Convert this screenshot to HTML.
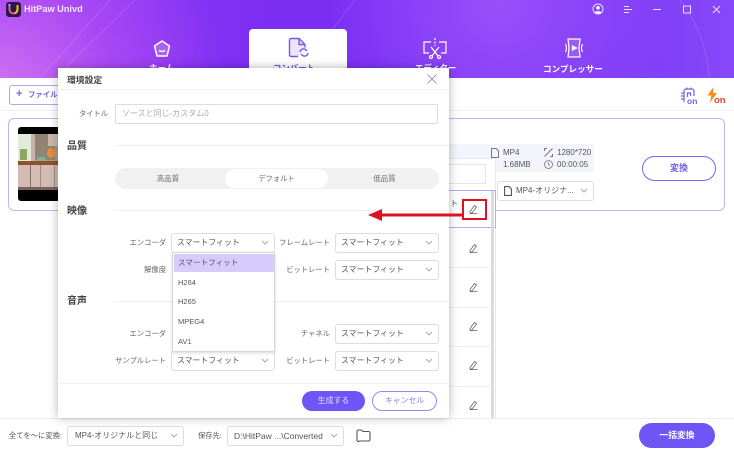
<!DOCTYPE html>
<html lang="ja"><head><meta charset="utf-8">
<style>
*{box-sizing:border-box;margin:0;padding:0}
html,body{width:734px;height:450px;overflow:hidden;background:#fff}
body{position:relative;font-family:"Liberation Sans","Noto Sans CJK JP",sans-serif;color:#444}
.a{position:absolute;white-space:nowrap}
.hd{left:0;top:0;width:734px;height:78px;background:radial-gradient(circle at 0 85px,#cf70f2 0,#a848f5 110px,rgba(140,55,245,0) 230px),radial-gradient(circle at 500px 5px,#9850fb 0,rgba(125,50,246,0) 170px),linear-gradient(90deg,#8a35f4 0,#7c2ef3 40%,#7c35f5 75%,#8548f8 100%);overflow:hidden}
.lab{font-size:7.3px;color:#666;text-align:right;line-height:12px}
.sel{position:absolute;height:20px;width:104px;border:1px solid #dcdce2;border-radius:3px;background:#fff;font-size:7.9px;color:#555;line-height:18px;padding-left:5px}
.sel svg,.bs svg{position:absolute;right:5px;top:6px}
.bs{position:absolute;height:20px;border:1px solid #dcdce2;border-radius:3px;background:#fff;font-size:8px;color:#555;line-height:18px;padding-left:7px}
.sec{font-size:10px;font-weight:bold;color:#444;left:67px}
.ln{height:1px;background:#eeeef1;left:115px;width:334px}
.pen{position:absolute;left:469px;width:9px;height:9px}
.opt{position:absolute;left:1px;width:100px;height:18px;font-size:7.5px;line-height:18px;padding-left:4px;color:#555}
</style></head><body>

<div class="a hd">
<svg class="a" style="left:0;top:0" width="734" height="78" fill="none" stroke="#fff" stroke-opacity=".14"><path d="M40 78L110 0M55 78L135 0M295 78L355 0M710 78C706 50 700 25 680 0"/></svg>
</div>

<svg class="a" style="left:6px;top:2px" width="15" height="15" viewBox="0 0 15 15"><rect width="15" height="15" rx="3" fill="#2a1a4a"/><path d="M3.500 4v3.500a4 4 0 0 0 8 0V3" fill="none" stroke="#f0509a" stroke-width="2"/><path d="M11.500 3v4.500a4 4 0 0 1-3 3.800" fill="none" stroke="#fbbf24" stroke-width="2"/><circle cx="3.500" cy="3" r="1.100" fill="#c4b5fd"/></svg>
<div class="a" style="left:24px;top:3px;font-size:9.200px;font-weight:bold;color:#f3e8ff;line-height:13px">HitPaw Univd</div>

<svg class="a" style="left:590px;top:3px" width="140" height="14" viewBox="0 0 140 14" fill="none" stroke="#e9dcff" stroke-width="1"><circle cx="8" cy="6" r="5"/><circle cx="8" cy="4.800" r="1.800" fill="#fff" stroke="none"/><path d="M4.500 9.500q3.500-3 7 0q-3.500 2.500-7 0" fill="#fff" stroke="none"/><path d="M34 3.500h5M34 6.500h8M34 9.500h5"/><path d="M63 6.500h8"/><rect x="93.500" y="3" width="7" height="7"/><path d="M123 3l7 7M130 3l-7 7"/></svg>

<!-- tabs -->
<svg class="a" style="left:153px;top:40px" width="18" height="18" viewBox="0 0 18 18" fill="none" stroke="#fff" stroke-width="1.500"><path d="M9 1l7.500 5-2.500 10H4L1.500 6z" stroke-linejoin="round" fill="#ffffff30"/><path d="M6 10.500q3 1.800 6 0"/></svg>
<div class="a" style="left:249px;top:29px;width:98px;height:49px;background:linear-gradient(#fff 70%,#eee);border-radius:4px 4px 0 0"></div>
<svg class="a" style="left:288px;top:37px" width="22" height="21" viewBox="0 0 22 21" fill="none" stroke="#7d56e8" stroke-width="1.400"><path d="M10 19.500H3a1.500 1.500 0 0 1-1.500-1.500V3A1.500 1.500 0 0 1 3 1.500h8l6 6v3" fill="#ece6fd"/><path d="M11 1.500v6h6"/><path d="M12 15a3.500 3.500 0 0 1 6-2l1 1M20 16a3.500 3.500 0 0 1-6 2l-1-1"/></svg>
<div class="a" style="left:273px;top:62px;font-size:8.400px;font-weight:bold;color:#7d56e8">コンバート</div>
<div class="a" style="left:149px;top:62px;font-size:8.500px;font-weight:bold;color:#fff">ホーム</div>
<svg class="a" style="left:423px;top:37px" width="24" height="23" viewBox="0 0 24 23" fill="none" stroke="#fff" stroke-width="1.200"><path d="M8 5H1v11h5M16 5h7v11h-5"/><path d="M12 1v8" stroke-dasharray="2 1.500"/><path d="M8 10l7 9M16 10l-7 9"/><circle cx="8" cy="20" r="1.500"/><circle cx="16" cy="20" r="1.500"/></svg>
<div class="a" style="left:415px;top:62px;font-size:8.400px;font-weight:bold;color:#fff">エディター</div>
<svg class="a" style="left:563px;top:37px" width="22" height="22" viewBox="0 0 22 22" fill="none" stroke="#fff" stroke-width="1.200"><path d="M5 2h12l-1 9 1 9H5l1-9z" fill="#ffffff20"/><path d="M9.500 9l4 2-4 2z" fill="#fff"/><path d="M2.500 7q2 4 0 8M19.500 7q-2 4 0 8"/></svg>
<div class="a" style="left:543px;top:63px;font-size:8.600px;font-weight:bold;color:#fff;line-height:12px">コンプレッサー</div>

<!-- toolbar -->
<div class="a" style="left:9px;top:85px;width:60px;height:20px;border:1px solid #b9a5f5;border-radius:3px"></div>
<div class="a" style="left:16px;top:87px;font-size:11px;font-weight:bold;color:#7d62e8;line-height:14px">+</div>
<div class="a" style="left:28px;top:89px;font-size:7.400px;font-weight:bold;color:#7d62e8;line-height:12px">ファイル</div>
<div class="a" style="left:0;top:110px;width:734px;height:1px;background:#f0f0f3"></div>
<svg class="a" style="left:680px;top:87px" width="17" height="16" viewBox="0 0 17 16" fill="none" stroke="#6f63e6" stroke-width="1.200"><path d="M4 15V4a2 2 0 0 1 2-2h6a2 2 0 0 1 2 2v5M1 6h3M1 9h3M1 12h3M7 .500v2M11 .500v2M7.500 12V6h3v3"/></svg>
<div class="a" style="left:687px;top:97px;font-size:8.500px;font-weight:bold;color:#6f63e6;line-height:9px;background:#fff">on</div>
<svg class="a" style="left:707px;top:87px" width="11" height="16" viewBox="0 0 11 16"><path d="M6.500 0L.5 8.500h3.800L3 15.500 10 6H6z" fill="#f98a16"/></svg>
<div class="a" style="left:714px;top:96px;font-size:9.500px;font-weight:bold;color:#e8431c;line-height:10px">on</div>

<!-- file card -->
<div class="a" style="left:8px;top:118px;width:717px;height:93px;border:1px solid #c3b4f7;border-radius:6px"></div>
<svg class="a" style="left:18px;top:127px" width="50" height="74" viewBox="0 0 50 74"><rect width="50" height="74" rx="3" fill="#000"/><rect y="7" width="50" height="56" fill="#b09a92"/><rect x="0" y="7" width="13" height="27" fill="#e3ead8"/><rect x="13" y="7" width="4" height="27" fill="#c9b3a8"/><rect x="17" y="7" width="20" height="26" fill="#8e8672"/><rect x="30" y="7" width="20" height="12" fill="#cdb8ae"/><rect x="2" y="22" width="7" height="11" fill="#8ea56a"/><rect x="0" y="34" width="50" height="4" fill="#8a5428"/><rect x="0" y="38" width="50" height="25" fill="#d4bcb4"/><rect x="12" y="38" width="1" height="25" fill="#8a7068"/><rect x="22" y="38" width="1" height="25" fill="#a08a82"/><rect x="36" y="38" width="1" height="25" fill="#a08a82"/><rect x="0" y="60" width="50" height="3" fill="#7a6258"/><ellipse cx="33" cy="26" rx="4" ry="5" fill="#e88c3c"/><rect x="19" y="30" width="8" height="4" fill="#7fae9c"/></svg>
<div class="a" style="left:445px;top:144px;width:149px;height:28px;background:#f4f4fc"></div>
<svg class="a" style="left:491px;top:148px" width="8" height="10" viewBox="0 0 8 10" fill="none" stroke="#777"><path d="M.5.500h4.500l2.500 2.500v6.500h-7z"/></svg>
<div class="a" style="left:503px;top:147px;font-size:8px;color:#555;line-height:12px">MP4</div>
<div class="a" style="left:503px;top:159px;font-size:8px;color:#555;line-height:12px">1.68MB</div>
<svg class="a" style="left:544px;top:148px" width="9" height="9" viewBox="0 0 9 9" fill="none" stroke="#777"><path d="M.5 3V.5H3M8.500 6v2.500H6M.5 8.500l8-8"/></svg>
<svg class="a" style="left:544px;top:160px" width="9" height="9" viewBox="0 0 9 9" fill="none" stroke="#777" stroke-width=".8"><circle cx="4.500" cy="4.500" r="4"/><path d="M4.500 2v2.500l1.500 1"/></svg>
<div class="a" style="left:557px;top:147px;font-size:8px;color:#555;line-height:12px">1280*720</div>
<div class="a" style="left:557px;top:159px;font-size:8px;color:#555;line-height:12px">00:00:05</div>
<div class="a" style="left:642px;top:156px;width:74px;height:25px;border:1.500px solid #7d62f0;border-radius:13px;text-align:center;font-size:9px;font-weight:bold;color:#7460ea;line-height:22px">変換</div>
<div class="bs" style="left:497px;top:181px;width:97px;padding-left:18px">MP4-オリジナ...<svg width="8" height="6" viewBox="0 0 8 6" fill="none" stroke="#aaa"><path d="M1 1l3 3 3-3"/></svg></div>
<svg class="a" style="left:504px;top:186px" width="8" height="10" viewBox="0 0 8 10" fill="#fff" stroke="#555" stroke-width="1.100"><path d="M.6.600h4.400l2.400 2.400v6.400H.6z"/></svg>

<!-- background list panel -->
<div class="a" style="left:430px;top:158px;width:66px;height:261px;background:#fff;border:1px solid #e8e8ec"></div>
<div class="a" style="left:430px;top:164px;width:56px;height:20px;border:1px solid #e4e4ea"></div>
<div class="a" style="left:430px;top:190px;width:66px;height:38px;border:1px solid #b6aaf0;background:#fff"></div>
<div class="a" style="left:449px;top:267px;width:41px;height:1px;background:#eeeef1"></div>
<div class="a" style="left:449px;top:307px;width:41px;height:1px;background:#eeeef1"></div>
<div class="a" style="left:449px;top:346px;width:41px;height:1px;background:#eeeef1"></div>
<div class="a" style="left:449px;top:386px;width:41px;height:1px;background:#eeeef1"></div>
<div class="a" style="left:491px;top:191px;width:3px;height:227px;background:#dcdce0"></div>
<div class="a" style="left:420px;top:198px;font-size:7.900px;color:#555;line-height:12px;width:38px;text-align:right">フィット</div>
<div class="a" style="left:462px;top:199px;width:25px;height:21px;border:2px solid #e01020"></div>
<svg class="pen" style="top:205px" viewBox="0 0 9 9" fill="none" stroke="#666" stroke-width=".8"><path d="M1 6.500l4.500-6 2 1.500-4.500 6H1zM1 8.600h7.500"/></svg>
<svg class="pen" style="top:244px" viewBox="0 0 9 9" fill="none" stroke="#666" stroke-width=".8"><path d="M1 6.500l4.500-6 2 1.500-4.500 6H1zM1 8.600h7.500"/></svg>
<svg class="pen" style="top:283px" viewBox="0 0 9 9" fill="none" stroke="#666" stroke-width=".8"><path d="M1 6.500l4.500-6 2 1.500-4.500 6H1zM1 8.600h7.500"/></svg>
<svg class="pen" style="top:322px" viewBox="0 0 9 9" fill="none" stroke="#666" stroke-width=".8"><path d="M1 6.500l4.500-6 2 1.500-4.500 6H1zM1 8.600h7.500"/></svg>
<svg class="pen" style="top:361px" viewBox="0 0 9 9" fill="none" stroke="#666" stroke-width=".8"><path d="M1 6.500l4.500-6 2 1.500-4.500 6H1zM1 8.600h7.500"/></svg>
<svg class="pen" style="top:401px" viewBox="0 0 9 9" fill="none" stroke="#666" stroke-width=".8"><path d="M1 6.500l4.500-6 2 1.500-4.500 6H1zM1 8.600h7.500"/></svg>

<!-- bottom bar -->
<div class="a" style="left:0;top:418px;width:734px;height:1px;background:#ececf0"></div>
<div class="a" style="left:9px;top:430px;font-size:7.300px;color:#555;line-height:12px">全てを～に変換:</div>
<div class="bs" style="left:67px;top:426px;width:117px;">MP4-オリジナルと同じ<svg width="8" height="6" viewBox="0 0 8 6" fill="none" stroke="#aaa"><path d="M1 1l3 3 3-3"/></svg></div>
<div class="a" style="left:198px;top:430px;font-size:7.300px;color:#555;line-height:12px">保存先:</div>
<div class="bs" style="left:227px;top:426px;width:117px;font-size:8.500px;line-height:18px;padding-left:6px">D:\HitPaw ...\Converted<svg width="8" height="6" viewBox="0 0 8 6" fill="none" stroke="#aaa"><path d="M1 1l3 3 3-3"/></svg></div>
<svg class="a" style="left:356px;top:429px" width="15" height="13" viewBox="0 0 15 13" fill="none" stroke="#555" stroke-width="1.100"><path d="M1 2.500a1.500 1.500 0 0 1 1.500-1.500h3l1.500 1.500h5.500a1.500 1.500 0 0 1 1.500 1.500v6.500a1.500 1.500 0 0 1-1.500 1.500h-9A1.500 1.500 0 0 1 1 10.500z"/></svg>
<div class="a" style="left:639px;top:423px;width:76px;height:25px;border-radius:13px;background:#6e55f5;color:#fff;font-size:8.800px;font-weight:bold;text-align:center;line-height:25px">一括変換</div>

<!-- modal -->
<div class="a" style="left:58px;top:68px;width:391px;height:350px;background:#fff;box-shadow:0 0 9px rgba(0,0,0,.3)"></div>
<div class="a" style="left:67px;top:73px;font-size:8.800px;font-weight:bold;color:#444;line-height:14px">環境設定</div>
<svg class="a" style="left:427px;top:74px" width="10" height="10" viewBox="0 0 10 10" stroke="#888" stroke-width=".8"><path d="M.5.500l9 9M9.500.500l-9 9"/></svg>
<div class="a" style="left:58px;top:89px;width:391px;height:1px;background:#f0f0f3"></div>

<div class="a lab" style="left:68px;top:108px;width:40px">タイトル</div>
<div class="a" style="left:115px;top:104px;width:323px;height:20px;border:1px solid #dcdce2;border-radius:2px;font-size:8px;color:#aaa;line-height:18px;padding-left:6px">ソースと同じ-カスタム0</div>

<div class="a sec" style="top:140px;line-height:14px">品質</div>
<div class="a ln" style="top:145px"></div>
<div class="a" style="left:115px;top:168px;width:324px;height:21px;border-radius:11px;background:#f1f1f4"></div>
<div class="a" style="left:225px;top:169px;width:103px;height:19px;border-radius:10px;background:#fff"></div>
<div class="a" style="left:113px;top:173px;width:110px;text-align:center;font-size:7.400px;color:#666;line-height:12px">高品質</div>
<div class="a" style="left:225px;top:173px;width:103px;text-align:center;font-size:7.300px;color:#666;line-height:12px">デフォルト</div>
<div class="a" style="left:329px;top:173px;width:111px;text-align:center;font-size:7.400px;color:#666;line-height:12px">低品質</div>

<div class="a sec" style="top:205px;line-height:14px">映像</div>
<div class="a ln" style="top:210px"></div>
<div class="a lab" style="left:110px;top:237px;width:56px">エンコーダ</div>
<div class="sel" style="left:171px;top:233px">スマートフィット<svg width="8" height="6" viewBox="0 0 8 6" fill="none" stroke="#aaa"><path d="M1 1l3 3 3-3"/></svg></div>
<div class="a lab" style="left:270px;top:237px;width:60px">フレームレート</div>
<div class="sel" style="left:335px;top:233px">スマートフィット<svg width="8" height="6" viewBox="0 0 8 6" fill="none" stroke="#aaa"><path d="M1 1l3 3 3-3"/></svg></div>
<div class="a lab" style="left:110px;top:264px;width:56px">解像度</div>
<div class="a lab" style="left:270px;top:264px;width:60px">ビットレート</div>
<div class="sel" style="left:335px;top:260px">スマートフィット<svg width="8" height="6" viewBox="0 0 8 6" fill="none" stroke="#aaa"><path d="M1 1l3 3 3-3"/></svg></div>

<div class="a sec" style="top:295px;line-height:14px">音声</div>
<div class="a ln" style="top:301px"></div>
<div class="a lab" style="left:110px;top:328px;width:56px">エンコーダ</div>
<div class="a lab" style="left:270px;top:328px;width:60px">チャネル</div>
<div class="sel" style="left:335px;top:324px">スマートフィット<svg width="8" height="6" viewBox="0 0 8 6" fill="none" stroke="#aaa"><path d="M1 1l3 3 3-3"/></svg></div>
<div class="a lab" style="left:100px;top:355px;width:66px">サンプルレート</div>
<div class="sel" style="left:171px;top:351px">スマートフィット<svg width="8" height="6" viewBox="0 0 8 6" fill="none" stroke="#aaa"><path d="M1 1l3 3 3-3"/></svg></div>
<div class="a lab" style="left:270px;top:355px;width:60px">ビットレート</div>
<div class="sel" style="left:335px;top:351px">スマートフィット<svg width="8" height="6" viewBox="0 0 8 6" fill="none" stroke="#aaa"><path d="M1 1l3 3 3-3"/></svg></div>

<!-- encoder dropdown -->
<div class="a" style="left:172px;top:252px;width:103px;height:100px;background:#fff;border:1px solid #d5d5dc;border-radius:2px;box-shadow:0 1px 3px rgba(0,0,0,.15)">
<div class="opt" style="top:1px;height:18px;background:#d6ccfb;border-radius:1px;font-size:7.600px">スマートフィット</div>
<div class="opt" style="top:21px">H264</div>
<div class="opt" style="top:40px">H265</div>
<div class="opt" style="top:60px">MPEG4</div>
<div class="opt" style="top:80px">AV1</div>
</div>

<div class="a" style="left:58px;top:383px;width:391px;height:1px;background:#f0f0f3"></div>
<div class="a" style="left:302px;top:391px;width:63px;height:20px;border-radius:10px;background:#6e55f5;color:#e4deff;font-size:7.900px;text-align:center;line-height:20px">生成する</div>
<div class="a" style="left:372px;top:391px;width:65px;height:20px;border-radius:10px;border:1px solid #9a85f5;color:#8f7bf2;font-size:7.900px;text-align:center;line-height:18px">キャンセル</div>

<!-- red arrow -->
<svg class="a" style="left:366px;top:206px" width="100" height="18" viewBox="0 0 100 18"><path d="M14 7.500H97v3H14z" fill="#e01020"/><path d="M2 9l14-6v12z" fill="#e01020"/></svg>

</body></html>
